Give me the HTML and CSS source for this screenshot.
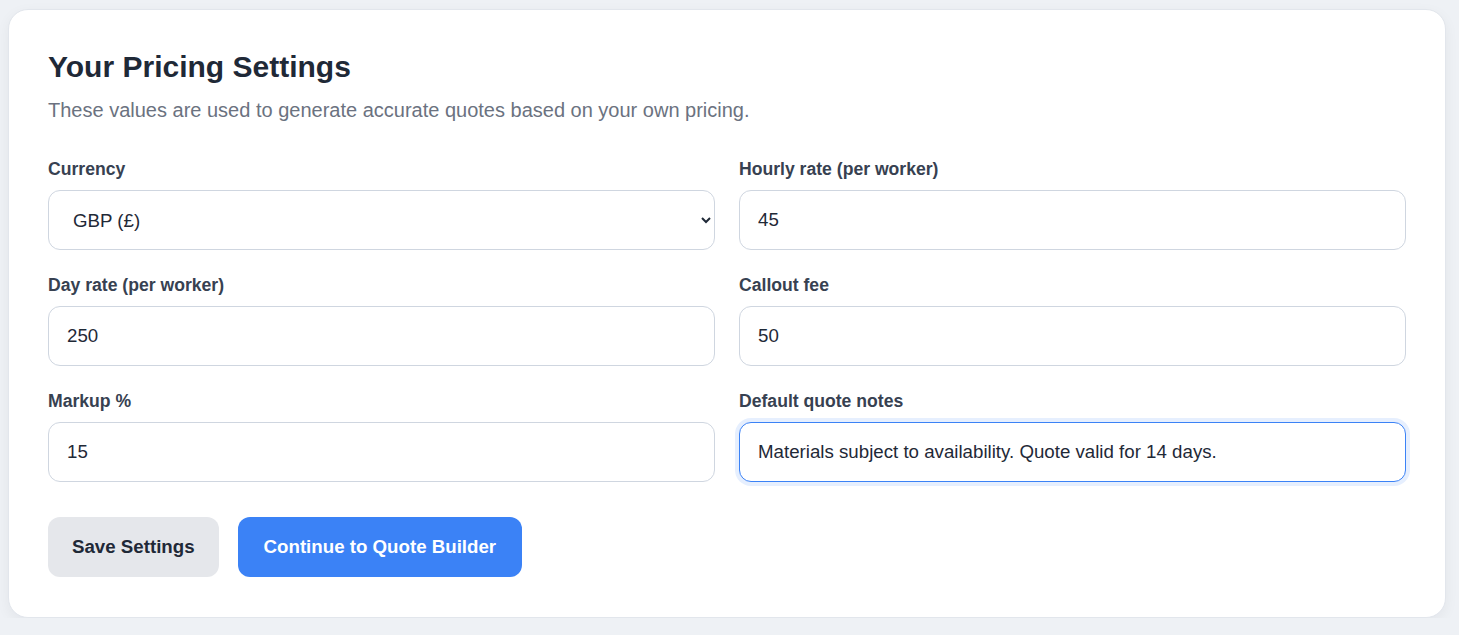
FILE: index.html
```html
<!DOCTYPE html>
<html lang="en">
<head>
<meta charset="utf-8">
<title>Your Pricing Settings</title>
<link rel="stylesheet" href="styles.css">
</head>
<body>
<main class="card">
  <h1 class="title">Your Pricing Settings</h1>
  <p class="subtitle">These values are used to generate accurate quotes based on your own pricing.</p>
  <form class="grid">
    <div class="field">
      <label class="label" for="currency">Currency</label>
      <select class="control select" id="currency">
        <option>GBP (£)</option>
        <option>EUR (€)</option>
        <option>USD ($)</option>
      </select>
    </div>
    <div class="field">
      <label class="label" for="hourly">Hourly rate (per worker)</label>
      <input class="control" id="hourly" type="text" value="45">
    </div>
    <div class="field">
      <label class="label" for="day">Day rate (per worker)</label>
      <input class="control" id="day" type="text" value="250">
    </div>
    <div class="field">
      <label class="label" for="callout">Callout fee</label>
      <input class="control" id="callout" type="text" value="50">
    </div>
    <div class="field">
      <label class="label" for="markup">Markup %</label>
      <input class="control" id="markup" type="text" value="15">
    </div>
    <div class="field">
      <label class="label" for="notes">Default quote notes</label>
      <input class="control is-focused" id="notes" type="text" value="Materials subject to availability. Quote valid for 14 days.">
    </div>
  </form>
  <div class="actions">
    <button class="btn btn-secondary" type="button">Save Settings</button>
    <button class="btn btn-primary" type="button">Continue to Quote Builder</button>
  </div>
</main>
<script src="script.js"></script>
</body>
</html>
```

FILE: styles.css
```css
* { box-sizing: border-box; }

html, body {
  margin: 0;
  background: #eef1f5;
}

body {
  padding: 9px 0 0 8px;
  font-family: "Liberation Sans", Arial, sans-serif;
  color: #1f2937;
}

.card {
  width: 1438px;
  background: #ffffff;
  border: 1px solid #e2e6ec;
  border-radius: 20px;
  padding: 39px 39px 40px;
  box-shadow: 0 4px 14px rgba(15, 23, 42, 0.05);
}

.title {
  margin: 0 0 10px;
  font-size: 30px;
  line-height: 36px;
  font-weight: 700;
  color: #1f2937;
}

.subtitle {
  margin: 0 0 33px;
  font-size: 20px;
  line-height: 30px;
  color: #6b7280;
}

.grid {
  display: grid;
  grid-template-columns: 1fr 1fr;
  column-gap: 24px;
  row-gap: 24px;
  margin: 0;
}

.field {
  display: flex;
  flex-direction: column;
}

.label {
  font-size: 17.6px;
  line-height: 22px;
  font-weight: 700;
  color: #374151;
  margin-bottom: 10px;
}

.control {
  height: 60px;
  width: 100%;
  border: 1px solid #cfd6e0;
  border-radius: 12px;
  padding: 0 18px;
  font-family: "Liberation Sans", Arial, sans-serif;
  font-size: 18.7px;
  color: #1f2937;
  background: #ffffff;
  outline: none;
}

.select {
  padding-left: 20px;
  padding-right: 10px;
}

.control.is-focused,
.control:focus {
  border-color: #3b82f6;
  box-shadow: 0 0 0 4px rgba(59, 130, 246, 0.13);
}

.actions {
  display: flex;
  gap: 19px;
  margin-top: 35px;
}

.btn {
  height: 60px;
  border: none;
  border-radius: 12px;
  padding: 0 24px;
  font-family: "Liberation Sans", Arial, sans-serif;
  font-size: 18.7px;
  font-weight: 700;
  cursor: pointer;
}

.btn-secondary {
  background: #e5e7eb;
  color: #1f2937;
}

.btn-primary {
  background: #3b82f6;
  color: #ffffff;
  padding: 0 26px;
}
```

FILE: script.js
```js
var notes = document.getElementById('notes');
notes.focus();
var len = notes.value.length;
notes.setSelectionRange(len, len);
```
